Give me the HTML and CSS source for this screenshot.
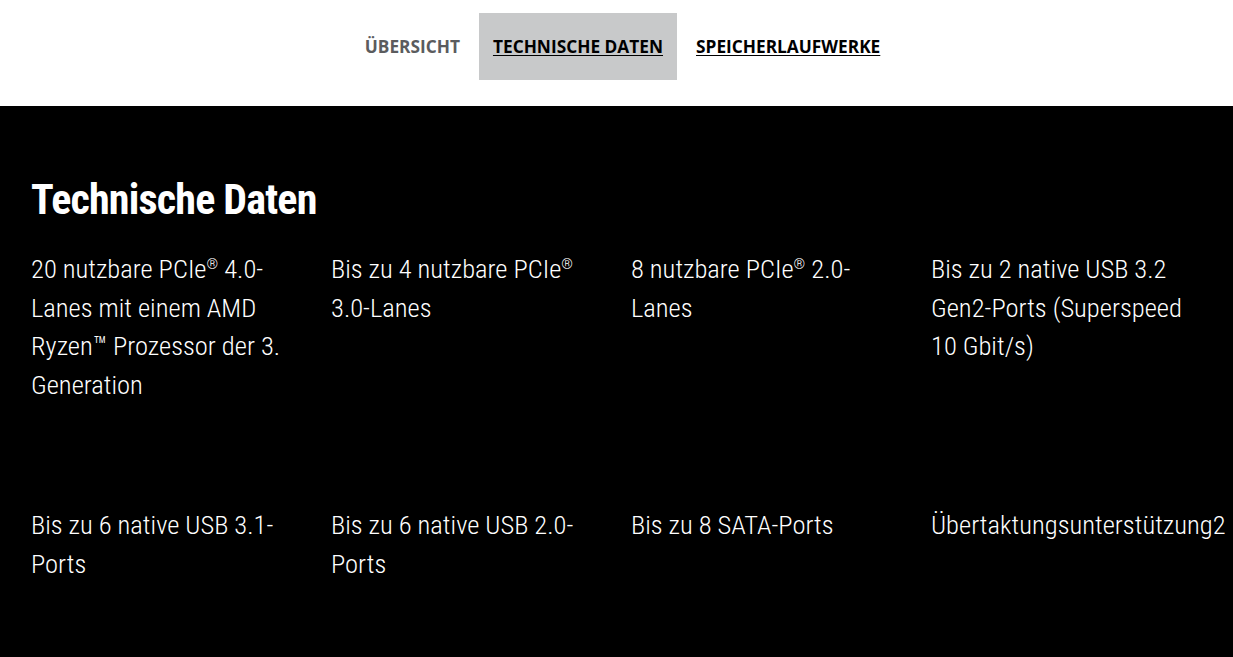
FILE: index.html
```html
<!DOCTYPE html>
<html lang="de">
<head>
<meta charset="utf-8">
<title>Technische Daten</title>
<link rel="stylesheet" href="styles.css">
</head>
<body>
<nav class="tabs">
  <a class="tab tab-muted">ÜBERSICHT</a>
  <a class="tab tab-active" href="#">TECHNISCHE DATEN</a>
  <a class="tab" href="#">SPEICHERLAUFWERKE</a>
</nav>
<section class="specs">
  <h2 class="specs-title">Technische Daten</h2>
  <div class="specs-grid">
    <p class="spec">20 nutzbare PCIe<sup>®</sup> 4.0-Lanes mit einem AMD Ryzen™ Prozessor der 3. Generation</p>
    <p class="spec">Bis zu 4 nutzbare PCIe<sup>®</sup> 3.0-Lanes</p>
    <p class="spec">8 nutzbare PCIe<sup>®</sup> 2.0-Lanes</p>
    <p class="spec">Bis zu 2 native USB 3.2 Gen2-Ports (Superspeed 10 Gbit/s)</p>
    <p class="spec">Bis zu 6 native USB 3.1-Ports</p>
    <p class="spec">Bis zu 6 native USB 2.0-Ports</p>
    <p class="spec">Bis zu 8 SATA-Ports</p>
    <p class="spec spec-nowrap">Übertaktungsunterstützung2</p>
  </div>
</section>
</body>
</html>
```
FILE: styles.css
```css
html, body {
  margin: 0;
  padding: 0;
  background: #000;
}
.tabs {
  background: #fff;
  height: 106px;
  box-sizing: border-box;
  padding: 13px 0 0 12px;
  display: flex;
  justify-content: center;
  align-items: flex-start;
  gap: 5px;
}
.tab {
  font-family: "Open Sans", sans-serif;
  font-weight: 700;
  font-size: 17.3px;
  color: #000;
  text-decoration: underline;
  text-underline-offset: 2px;
  height: 67px;
  line-height: 67px;
  padding: 0 14px;
}
.tab-muted {
  color: #5b5c5e;
  text-decoration: none;
}
.tab-active {
  background: #c8c9ca;
}
.specs {
  padding: 66px 0 40px 31px;
  color: #fff;
  font-family: "Roboto Condensed", "Open Sans", sans-serif;
}
.specs-title {
  margin: 0 0 22px 0;
  font-size: 42px;
  font-weight: 700;
  line-height: 56px;
  letter-spacing: -0.8px;
}
.specs-grid {
  display: grid;
  grid-template-columns: repeat(4, 300px);
  row-gap: 102px;
}
.spec {
  margin: 0;
  font-size: 26.5px;
  font-weight: 350;
  line-height: 38.5px;
  padding-right: 20px;
}
.spec sup {
  font-size: 0.55em;
  line-height: 0;
  vertical-align: 0.65em;
}
.spec-nowrap {
  white-space: nowrap;
  padding-right: 0;
}
```
